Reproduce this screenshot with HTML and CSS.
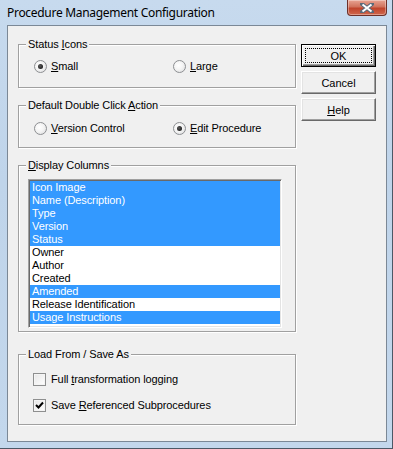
FILE: index.html
```html
<!DOCTYPE html>
<html lang="en">
<head>
    <meta charset="UTF-8">
    <title>Procedure Management Configuration</title>
    <link rel="stylesheet" href="styles.css">
</head>
<body>
    <div class="window">
        <div class="titlebar">
            <span class="title">Procedure Management Configuration</span>
            <div class="close-btn">
                <svg width="14" height="10" viewBox="0 0 14 10">
                    <path d="M2 1 L12 9 M12 1 L2 9" stroke="#5a6a7a" stroke-width="4" stroke-linecap="square"/>
                    <path d="M2.5 1.5 L11.5 8.5 M11.5 1.5 L2.5 8.5" stroke="#ffffff" stroke-width="2"/>
                </svg>
            </div>
        </div>
        <div class="client">
            <div class="groups">
                <div class="group group-status">
                    <span class="group-label">Status <u>I</u>cons</span>
                    <div class="option-row">
                        <label class="option"><span class="radio checked"></span><span><u>S</u>mall</span></label>
                        <label class="option"><span class="radio"></span><span><u>L</u>arge</span></label>
                    </div>
                </div>
                <div class="group group-action">
                    <span class="group-label">Default Double Click <u>A</u>ction</span>
                    <div class="option-row">
                        <label class="option"><span class="radio"></span><span><u>V</u>ersion Control</span></label>
                        <label class="option"><span class="radio checked"></span><span><u>E</u>dit Procedure</span></label>
                    </div>
                </div>
                <div class="group group-columns">
                    <span class="group-label"><u>D</u>isplay Columns</span>
                    <ul class="listbox">
                        <li class="selected">Icon Image</li>
                        <li class="selected">Name (Description)</li>
                        <li class="selected">Type</li>
                        <li class="selected">Version</li>
                        <li class="selected">Status</li>
                        <li>Owner</li>
                        <li>Author</li>
                        <li>Created</li>
                        <li class="selected">Amended</li>
                        <li>Release Identification</li>
                        <li class="selected">Usage Instructions</li>
                    </ul>
                </div>
                <div class="group group-load">
                    <span class="group-label">Load From / Save As</span>
                    <label class="option"><span class="checkbox"></span><span>Full <u>t</u>ransformation logging</span></label>
                    <label class="option"><span class="checkbox">
                        <svg width="9" height="9" viewBox="0 0 9 9"><path d="M1 4 L3.5 6.5 L8 1.5" fill="none" stroke="#000" stroke-width="2"/></svg>
                    </span><span>Save <u>R</u>eferenced Subprocedures</span></label>
                </div>
            </div>
            <div class="buttons">
                <button class="btn default"><span class="focus">OK</span></button>
                <button class="btn">Cancel</button>
                <button class="btn"><u>H</u>elp</button>
            </div>
        </div>
    </div>
</body>
</html>
```

FILE: styles.css
```css
body {
    margin: 0;
    padding: 0;
    background: #ffffff;
}
.window {
    width: 393px;
    height: 449px;
    box-sizing: border-box;
    background: linear-gradient(180deg, #c7daee 0%, #bfd4ea 40%, #c3d7ec 100%);
    border-right: 1px solid #4c5866;
    border-bottom: 1px solid #4c5866;
    display: flex;
    flex-direction: column;
}
.titlebar {
    height: 25px;
    display: flex;
    align-items: flex-start;
}
.title {
    font-family: "Noto Sans", sans-serif;
    font-size: 12px;
    letter-spacing: -0.3px;
    color: #000;
    padding-left: 7px;
    line-height: 26px;
}
.close-btn {
    margin-left: auto;
    margin-right: 5px;
    width: 40px;
    height: 16px;
    box-sizing: border-box;
    border: 1px solid #6d3029;
    border-top: none;
    border-radius: 0 0 4px 4px;
    background: linear-gradient(180deg, #e8a493 0%, #d1735d 45%, #c0442c 55%, #d0674c 100%);
    box-shadow: inset 0 0 0 1px rgba(255, 255, 255, 0.35);
    display: flex;
    justify-content: center;
    align-items: center;
}
.client {
    margin: 0 5px 0 7px;
    height: 417px;
    box-sizing: border-box;
    border: 1px solid #7b8896;
    background: #f0f0f0;
    padding: 18px 0 0 10px;
    display: flex;
    gap: 5px;
    font-family: "Liberation Sans", Arial, sans-serif;
    font-size: 11px;
    letter-spacing: -0.1px;
    color: #000;
}
.groups {
    width: 278px;
    display: flex;
    flex-direction: column;
}
.group {
    position: relative;
    border: 1px solid #a0a0a0;
    box-shadow: inset 1px 1px 0 #ffffff, 1px 1px 0 #ffffff;
}
.group-label {
    position: absolute;
    top: -7px;
    left: 7px;
    padding: 0 2px;
    line-height: 13px;
    background: #f0f0f0;
}
.group-status {
    padding: 15px 0 14px 15px;
}
.group-action {
    margin-top: 17px;
    padding: 16px 0 12px 15px;
}
.group-columns {
    margin-top: 17px;
    padding: 13px 13px 3px 9px;
}
.group-load {
    margin-top: 22px;
    padding: 18px 0 12px 14px;
    display: flex;
    flex-direction: column;
    gap: 13px;
}
.option-row {
    display: grid;
    grid-template-columns: 139px 1fr;
}
.option {
    display: flex;
    align-items: center;
    gap: 4px;
    height: 13px;
    line-height: 13px;
    white-space: nowrap;
}
.radio {
    width: 13px;
    height: 13px;
    box-sizing: border-box;
    border-radius: 50%;
    border: 1px solid #8d8f92;
    background: radial-gradient(circle at 40% 40%, #ffffff 0%, #f4f4f4 45%, #d8d9da 100%);
    display: flex;
    justify-content: center;
    align-items: center;
}
.radio.checked::after {
    content: "";
    width: 5px;
    height: 5px;
    border-radius: 50%;
    background: radial-gradient(circle at 40% 40%, #5a5a5a, #0a0a0a);
}
.checkbox {
    width: 13px;
    height: 13px;
    margin-right: 1px;
    box-sizing: border-box;
    border: 1px solid #8e8f8f;
    background: linear-gradient(135deg, #e6e6e6, #ffffff);
    box-shadow: inset 0 0 0 1px #f4f4f4;
    display: flex;
    justify-content: center;
    align-items: center;
}
.listbox {
    list-style: none;
    margin: 0;
    padding: 1px 1px 1px 0;
    height: 149px;
    box-sizing: border-box;
    background: #ffffff;
    border: 1px solid;
    border-color: #a0a0a0 #ffffff #ffffff #a0a0a0;
    box-shadow: inset 1px 1px 0 #696969, inset -1px -1px 0 #e3e3e3;
}
.listbox li {
    height: 13px;
    line-height: 13px;
    padding-left: 2px;
    margin-left: 1px;
}
.listbox li.selected {
    background: #3399ff;
    color: #ffffff;
}
.buttons {
    display: flex;
    flex-direction: column;
    gap: 4px;
}
.btn {
    width: 75px;
    height: 23px;
    padding: 0;
    font-family: "Liberation Sans", Arial, sans-serif;
    font-size: 11px;
    color: #000;
    background: #f0f0f0;
    border: 1px solid;
    border-color: #ffffff #696969 #696969 #ffffff;
    box-shadow: inset -1px -1px 0 #a0a0a0, inset 1px 1px 0 #e3e3e3;
}
.btn.default {
    border: 1px solid #000;
    box-shadow: inset 1px 1px 0 #ffffff, inset -1px -1px 0 #696969, inset -2px -2px 0 #a0a0a0;
    display: flex;
    padding: 3px;
}
.focus {
    flex: 1;
    border: 1px dotted #000;
    display: flex;
    justify-content: center;
    align-items: center;
}
```
